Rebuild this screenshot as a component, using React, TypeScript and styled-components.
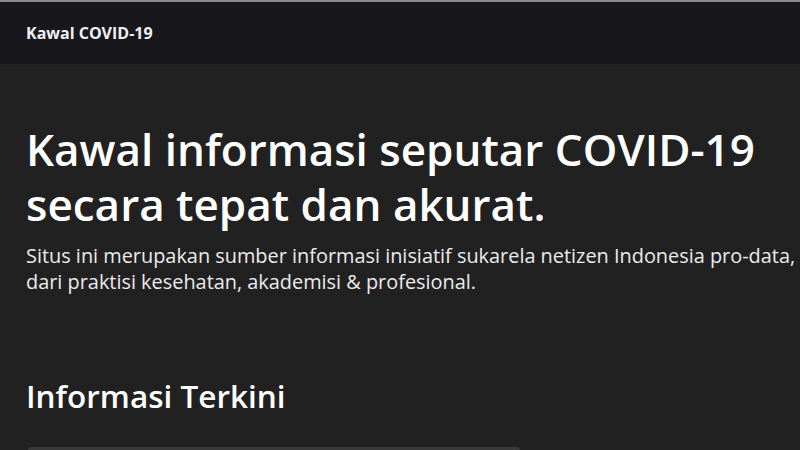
import * as React from 'react';
import styled, { createGlobalStyle } from 'styled-components';

const Global = createGlobalStyle`
    html, body {
        margin: 0;
        padding: 0;
        background: #212121;
        overflow: hidden;
    }
    body {
        font-family: 'Open Sans', 'Noto Sans', sans-serif;
        color: #fff;
    }
`;

const Page = styled.div`
    height: 450px;
    overflow: hidden;
    border-top: 2px solid #8a8a8c;
`;

const Navbar = styled.nav`
    display: flex;
    align-items: center;
    height: 62px;
    padding: 0 26px;
    background: #17171c;
    border-bottom: 1px solid #26262a;
`;

const Brand = styled.a`
    font-size: 16px;
    font-weight: 700;
    color: #f2f2f2;
    text-decoration: none;
`;

const Main = styled.main`
    padding: 57px 26px 0;
`;

const Title = styled.h1`
    margin: 0;
    font-size: 44px;
    font-weight: 600;
    line-height: 55px;
    color: #fff;
`;

const Lead = styled.p`
    margin: 11px 0 0;
    font-size: 19.9px;
    line-height: 26px;
    color: #ececec;
    white-space: nowrap;
`;

const Section = styled.h2`
    margin: 81px 0 0;
    font-size: 31.5px;
    font-weight: 600;
    line-height: 40px;
    color: #fff;
`;

const Card = styled.div`
    margin-top: 31px;
    width: 492px;
    height: 80px;
    margin-left: 2px;
    border-radius: 4px;
    background: linear-gradient(#3c3c3c, #333 6px);
`;

export default function App() {
    return (
        <>
            <Global />
            <Page>
                <Navbar>
                    <Brand href="#">Kawal COVID-19</Brand>
                </Navbar>
                <Main>
                    <Title>
                        Kawal informasi seputar COVID-19
                        <br />
                        secara tepat dan akurat.
                    </Title>
                    <Lead>
                        Situs ini merupakan sumber informasi inisiatif sukarela netizen Indonesia pro-data,
                        <br />
                        dari praktisi kesehatan, akademisi &amp; profesional.
                    </Lead>
                    <Section>Informasi Terkini</Section>
                    <Card />
                </Main>
            </Page>
        </>
    );
}
